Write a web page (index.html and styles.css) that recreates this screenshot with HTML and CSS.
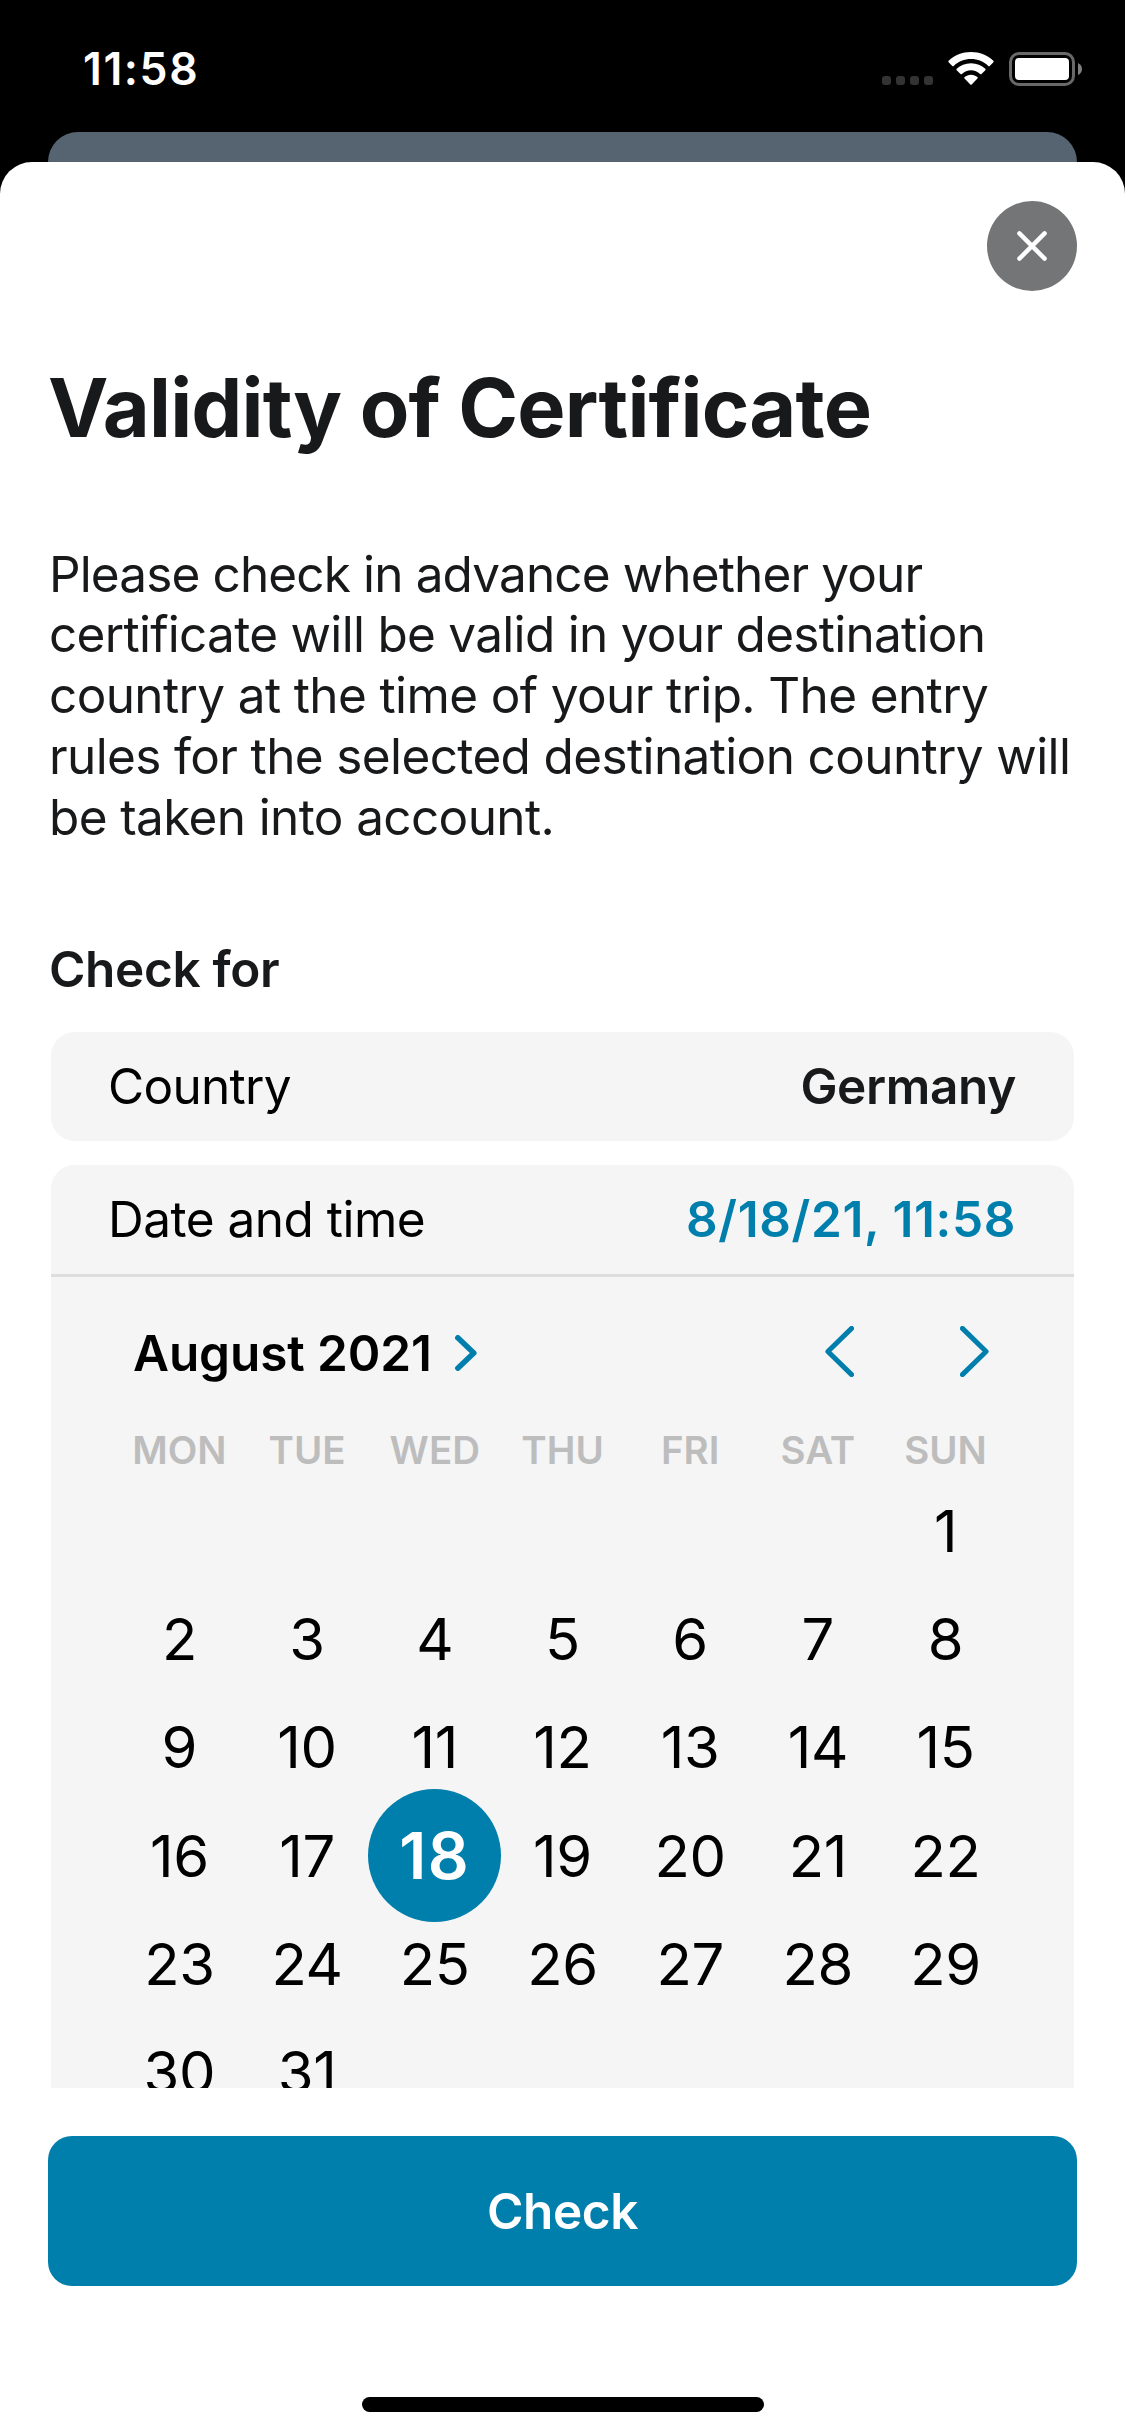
FILE: index.html
```html
<!DOCTYPE html>
<html lang="en">
<head>
<meta charset="utf-8">
<title>Validity of Certificate</title>
<link rel="stylesheet" href="styles.css">
</head>
<body>
<header class="status">
  <span class="clock">11:58</span>
  <span class="dots"><i></i><i></i><i></i><i></i></span>
  <svg class="wifi" viewBox="0 0 46 33" width="46" height="33">
    <path d="M23 0C31.700 0 39.500 3.300 45.400 8.800Q46 9.500 45.400 10.200L41.700 13.900Q41 14.500 40.300 13.900C35.700 9.600 29.700 7 23 7S10.300 9.600 5.700 13.900Q5 14.500 4.300 13.900L.6 10.200Q0 9.500.6 8.800C6.500 3.300 14.300 0 23 0Z"/>
    <path d="M23 11.300C28.600 11.300 33.700 13.400 37.300 16.800Q38 17.500 37.300 18.200L33.500 22Q32.800 22.600 32.100 22C29.700 19.700 26.500 18.300 23 18.300S16.300 19.700 13.900 22Q13.200 22.600 12.500 22L8.700 18.200Q8 17.500 8.700 16.800C12.300 13.400 17.400 11.300 23 11.300Z"/>
    <path d="M23 22.700C25.500 22.700 27.800 23.600 29.400 25.100Q30 25.700 29.400 26.400L23.700 32.500Q23 33.200 22.300 32.500L16.600 26.400Q16 25.700 16.600 25.100C18.200 23.600 20.500 22.700 23 22.700Z"/>
  </svg>
  <svg class="battery" viewBox="0 0 74 34" width="74" height="34">
    <rect x="1.500" y="1.500" width="63" height="31" rx="8.500" fill="none" stroke="#696969" stroke-width="3"/>
    <rect x="6" y="6" width="54" height="22" rx="4" fill="#fff"/>
    <path d="M69 11Q73 13 73 17T69 23Z" fill="#808080"/>
  </svg>
</header>
<div class="backcard"></div>
<main class="sheet">
  <div class="scroll">
    <div class="closerow">
      <button class="close" aria-label="Close">
        <svg viewBox="0 0 30 30" width="30" height="30"><path d="M2.400 2.400 27.600 27.600M27.600 2.400 2.400 27.600" stroke="#fff" stroke-width="4.400" stroke-linecap="round"/></svg>
      </button>
    </div>
    <h1 class="title">Validity of Certificate</h1>
    <p class="intro"><span class="tighter">Please check in advance whether your</span><br><span class="tight">certificate will be valid in your destination</span><br>country at the time of your trip. The entry<br>rules for the selected destination country will<br>be taken into account.</p>
    <h2 class="subtitle">Check for</h2>
    <section class="card">
      <div class="row"><span class="country">Country</span><span class="germany">Germany</span></div>
    </section>
    <section class="card">
      <div class="row"><span class="datelabel">Date and time</span><span class="datevalue">8/18/21, 11:58</span></div>
      <div class="divider"></div>
      <div class="month">
        <span class="monthname">August 2021</span>
        <svg class="more" viewBox="0 0 22 36" width="22" height="36"><path d="M2.800 2.800 18.800 18 2.800 33.200"/></svg>
        <svg class="prev" viewBox="0 0 29 51" width="29" height="51"><path d="M26.600 2.400 2.900 25.500 26.600 48.600"/></svg>
        <svg class="next" viewBox="0 0 29 51" width="29" height="51"><path d="M2.400 2.400 26.100 25.500 2.400 48.600"/></svg>
      </div>
      <div class="weekdays"><span>MON</span><span>TUE</span><span>WED</span><span>THU</span><span>FRI</span><span>SAT</span><span>SUN</span></div>
      <div class="days">
        <span class="first">1</span>
        <span>2</span><span>3</span><span>4</span><span>5</span><span>6</span><span>7</span><span>8</span>
        <span>9</span><span>10</span><span>11</span><span>12</span><span>13</span><span>14</span><span>15</span>
        <span>16</span><span>17</span><span><b class="selected">18</b></span><span>19</span><span>20</span><span>21</span><span>22</span>
        <span>23</span><span>24</span><span>25</span><span>26</span><span>27</span><span>28</span><span>29</span>
        <span>30</span><span>31</span>
      </div>
    </section>
  </div>
  <button class="check">Check</button>
  <div class="home"></div>
</main>
</body>
</html>
```
FILE: styles.css
```css
* { box-sizing: border-box; }

body {
  margin: 0;
  width: 1125px;
  height: 2436px;
  overflow: hidden;
  display: flex;
  flex-direction: column;
  background: #000;
  color: #18191b;
  font-family: Inter, "Liberation Sans", sans-serif;
  white-space: nowrap;
}

h1, h2, p { margin: 0; }
button { border: 0; padding: 0; font-family: inherit; }
svg { display: block; fill: none; flex: none; }

.status {
  height: 132px;
  display: flex;
  align-items: flex-start;
  padding: 52px 42px 0 83px;
  color: #fff;
}
.clock {
  flex: 1;
  font-size: 44.500px;
  line-height: 34px;
  font-weight: 560;
  letter-spacing: 1.600px;
}
.dots { display: flex; gap: 5px; margin: 24px 15px 0 0; }
.dots i { width: 9px; height: 9px; border-radius: 3px; background: #333; }
.wifi { margin-right: 15px; fill: #fff; }

.backcard {
  height: 30px;
  margin: 0 48px;
  border-radius: 30px 30px 0 0;
  background: #566370;
}

.sheet {
  flex: 1;
  min-height: 0;
  display: flex;
  flex-direction: column;
  background: #fff;
  border-radius: 32px 32px 0 0;
}
.scroll {
  height: 1926px;
  padding: 39px 48px 0;
  overflow: hidden;
}

.closerow { display: flex; justify-content: flex-end; }
.close {
  width: 90px;
  height: 90px;
  border-radius: 50%;
  background: #747576;
  display: grid;
  place-items: center;
}

.title {
  margin-top: 67px;
  font-size: 81px;
  line-height: 100px;
  font-weight: 700;
  letter-spacing: -0.820px;
}
.intro {
  margin-top: 85.600px;
  padding-left: 1px;
  font-size: 49.500px;
  line-height: 60.800px;
  letter-spacing: -0.630px;
}
.tighter { letter-spacing: -0.870px; }
.tight { letter-spacing: -0.710px; }
.subtitle {
  margin-top: 91.400px;
  padding-left: 1px;
  font-size: 49.500px;
  line-height: 60px;
  font-weight: 600;
  letter-spacing: -0.350px;
}

.card {
  margin: 33px 3px 0;
  border-radius: 24px;
  background: #f5f5f5;
  color: #000;
}
.card + .card { margin-top: 24px; }
.row {
  height: 109px;
  padding: 0 58px 0 57px;
  display: flex;
  justify-content: space-between;
  align-items: center;
  font-size: 49.500px;
  letter-spacing: -0.500px;
}
.country { letter-spacing: -0.700px; }
.germany { color: #18191b; font-weight: 600; letter-spacing: -0.350px; }
.datevalue { color: #007fad; font-weight: 600; letter-spacing: 0.620px; }
.divider { height: 3px; background: #dddddd; }

.month {
  height: 60px;
  margin-top: 46px;
  padding: 0 85px 0 82px;
  display: flex;
  align-items: center;
}
.monthname { font-size: 49.500px; font-weight: 600; letter-spacing: -0.100px; width: 322px; }
.month svg { stroke: #007fad; stroke-linecap: round; stroke-linejoin: round; }
.more { stroke-width: 5.500px; }
.prev { margin: -3px 106px 0 auto; stroke-width: 5px; }
.next { margin-top: -3px; stroke-width: 5px; }

.weekdays, .days {
  display: grid;
  grid-template-columns: repeat(7, 127.700px);
  justify-content: center;
  text-align: center;
}
.weekdays {
  margin-top: 47px;
  font-size: 38.500px;
  line-height: 40px;
  font-weight: 600;
  color: #bdbdbe;
}
.days {
  margin-top: 7px;
  grid-auto-rows: 108.200px;
  font-size: 58px;
  line-height: 108px;
  letter-spacing: -0.300px;
}
.days span { display: flex; justify-content: center; align-items: center; }
.first { grid-column: 7; }
.selected {
  flex: none;
  width: 133px;
  height: 133px;
  border-radius: 50%;
  line-height: 133px;
  background: #007fad;
  color: #fff;
  font-size: 64px;
  font-weight: 600;
  letter-spacing: 1.500px;
}

.check {
  height: 150px;
  margin: 48px 48px 0;
  border-radius: 24px;
  background: #007fad;
  color: #fff;
  font-size: 49.500px;
  line-height: 150px;
  font-weight: 600;
  letter-spacing: -0.400px;
}
.home {
  width: 402px;
  height: 15px;
  margin: 111px auto 0;
  border-radius: 8px;
  background: #000;
}
```
